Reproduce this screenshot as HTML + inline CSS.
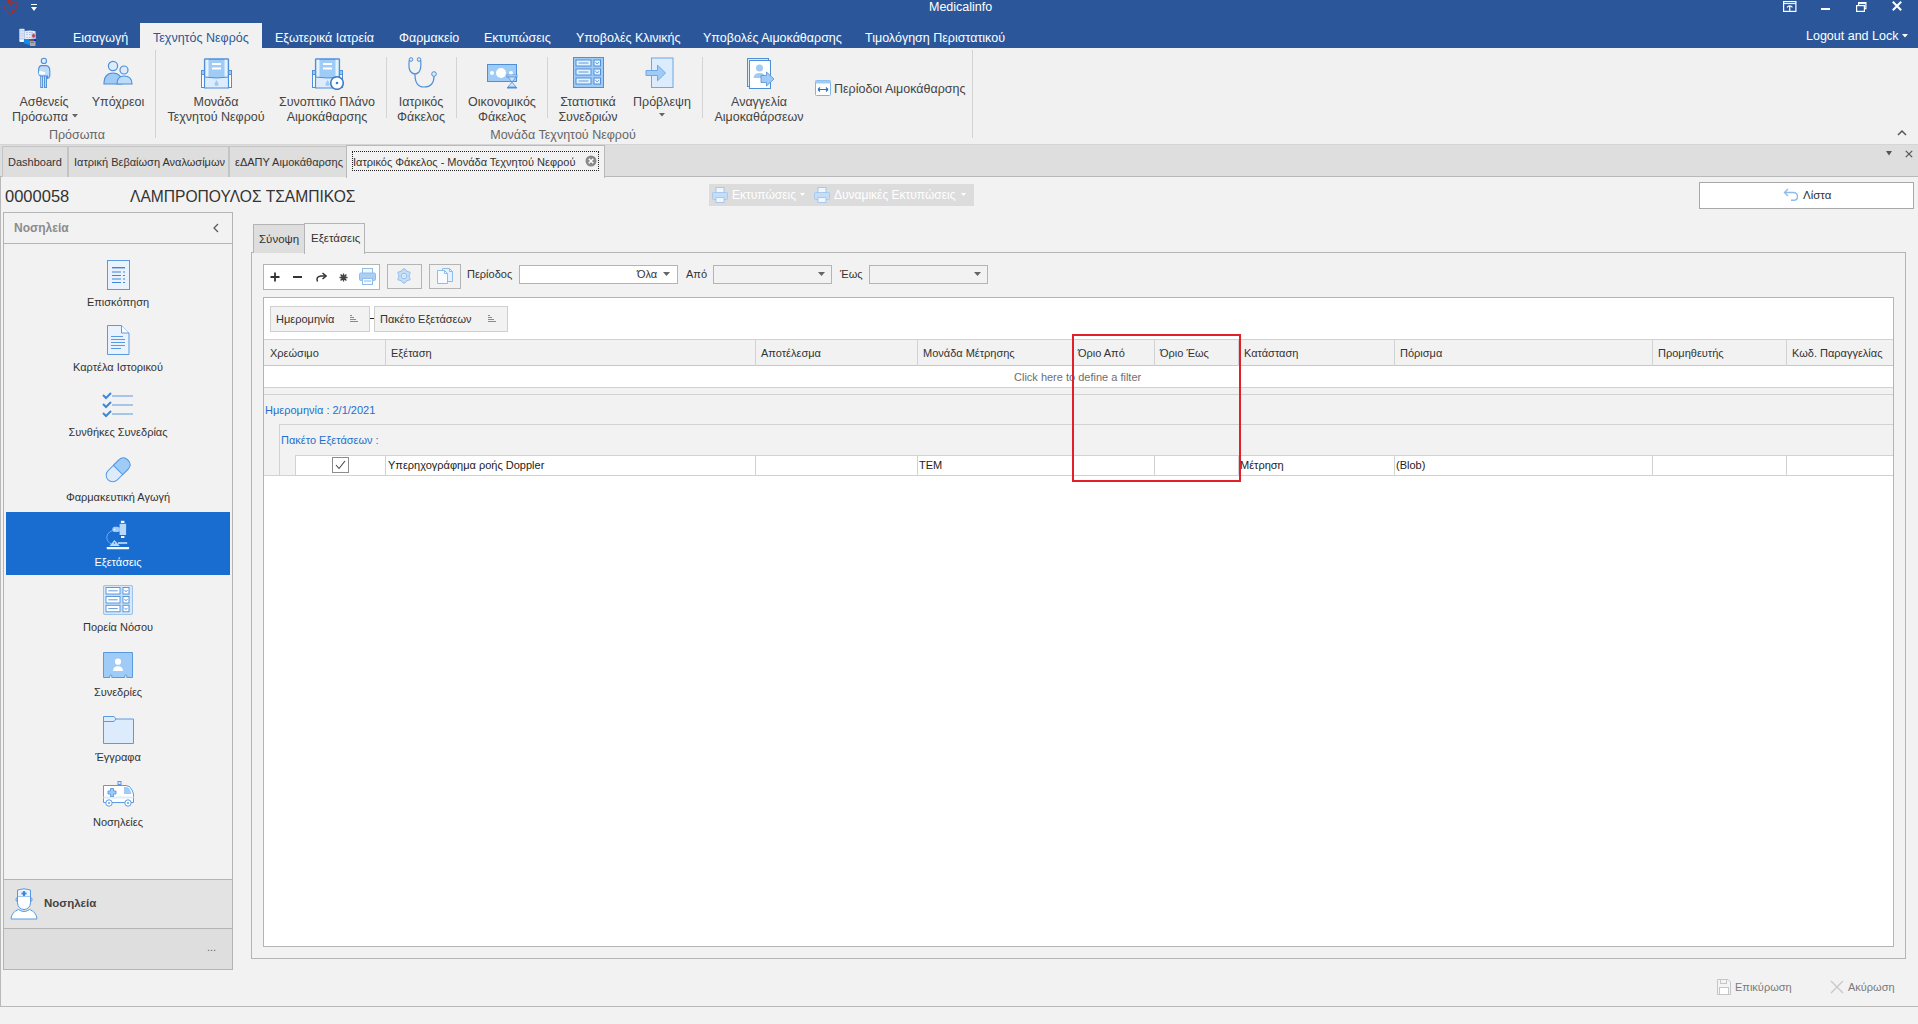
<!DOCTYPE html>
<html><head><meta charset="utf-8">
<style>
*{margin:0;padding:0;box-sizing:border-box}
html,body{width:1918px;height:1024px;overflow:hidden;background:#f2f2f2;font-family:"Liberation Sans",sans-serif;color:#333}
.a{position:absolute;white-space:nowrap}
.t{position:absolute;white-space:nowrap;line-height:1}
#title{left:0;top:0;width:1918px;height:48px;background:#2b579a}
.rt{position:absolute;top:32px;font-size:12.5px;color:#fff;line-height:1}
#ribbon{left:0;top:48px;width:1918px;height:97px;background:#f1f1f1;border-bottom:1px solid #d5d5d5}
.rl{position:absolute;font-size:12.5px;color:#444;line-height:15px;text-align:center;white-space:nowrap}
.sep{position:absolute;width:1px;background:#d4d4d4}
.doctabs{left:0;top:145px;width:1918px;height:32px;background:#dedede;border-bottom:1px solid #b9b9b9}
.dt{position:absolute;white-space:nowrap;top:146px;height:31px;background:#dedede;border:1px solid #c4c4c4;border-bottom:none;font-size:11px;color:#333;line-height:31px;padding-left:5px}
.bx{position:absolute;border:1px solid #adadad}
.nav-l{position:absolute;font-size:11px;color:#333;text-align:center;width:224px;left:6px;line-height:1}
.gh{position:absolute;top:340px;height:26px;font-size:11px;color:#333;line-height:26px}
.vs{position:absolute;width:1px;background:#d8d8d8}
.hs{position:absolute;height:1px;background:#d8d8d8}
</style></head><body>

<!-- title bar -->
<div class="a" id="title"></div>
<div class="t" style="left:929px;top:1px;font-size:12.5px;color:#fff">Medicalinfo</div>

<!-- ribbon tabs -->
<div class="a" style="left:140px;top:23px;width:122px;height:26px;background:#f1f1f1"></div>
<div class="rt" style="left:73px">Εισαγωγή</div>
<div class="rt" style="left:153px;color:#2b579a">Τεχνητός Νεφρός</div>
<div class="rt" style="left:275px">Εξωτερικά Ιατρεία</div>
<div class="rt" style="left:399px">Φαρμακείο</div>
<div class="rt" style="left:484px">Εκτυπώσεις</div>
<div class="rt" style="left:576px">Υποβολές Κλινικής</div>
<div class="rt" style="left:703px">Υποβολές Αιμοκάθαρσης</div>
<div class="rt" style="left:865px">Τιμολόγηση Περιστατικού</div>
<div class="rt" style="left:1806px;top:30px">Logout and Lock</div>

<!-- ribbon body -->
<div class="a" id="ribbon"></div>
<!-- title bar icons -->
<svg class="a" style="left:0px;top:0px" width="20" height="16" viewBox="0 0 20 16"><ellipse cx="8.9" cy="1.6" rx="1.9" ry="2.2" fill="#b8281f"/><path d="M8.4 5.6 Q5 5 4.4 6.6 Q4 9.5 6 11 L11 14.6" fill="none" stroke="#a83040" stroke-width="1" opacity="0.85"/><path d="M9.6 6 L13 2.4 Q16 0.8 17.4 2.4 Q17.8 5 16 8.5 L14 11" fill="none" stroke="#b02a26" stroke-width="1.1"/><path d="M9.5 4.5 V8" stroke="#8a3a50" stroke-width="0.8"/><circle cx="12.6" cy="11.8" r="1.4" fill="#c0241a"/></svg>
<svg class="a" style="left:31px;top:4px" width="7" height="8" viewBox="0 0 7 8"><rect x="0" y="0" width="6" height="1" fill="#fff"/><path d="M0 3 H6 L3 7 Z" fill="#fff"/></svg>
<svg class="a" style="left:1783px;top:1px" width="14" height="11" viewBox="0 0 14 11"><rect x="0.6" y="0.6" width="12.3" height="9.8" fill="none" stroke="#fff" stroke-width="1.2"/><line x1="0.6" y1="2.6" x2="12.9" y2="2.6" stroke="#fff" stroke-width="1"/><path d="M4 6.3 Q6.75 3.3 9.5 6.3 M6.75 5 V10" stroke="#fff" fill="none" stroke-width="1.2"/></svg>
<div class="a" style="left:1821px;top:7.5px;width:9px;height:2.5px;background:#fff"></div>
<svg class="a" style="left:1856px;top:1px" width="11" height="11" viewBox="0 0 11 11"><rect x="0.6" y="4.6" width="7.8" height="5.8" fill="none" stroke="#fff" stroke-width="1.2"/><path d="M2.6 4.6 V1.6 H9.9 V7.6 H8.4" fill="none" stroke="#fff" stroke-width="1.2"/><path d="M2.6 2.6 H9.9" stroke="#fff" stroke-width="1"/></svg>
<svg class="a" style="left:1892px;top:1px" width="10" height="10" viewBox="0 0 10 10"><path d="M0.8 0.8 L9.2 9.2 M9.2 0.8 L0.8 9.2" stroke="#fff" stroke-width="2"/></svg>
<svg class="a" style="left:19px;top:28px" width="18" height="18" viewBox="0 0 18 18"><rect x="0.3" y="0.8" width="5.3" height="13.2" rx="0.8" fill="#dbe4f4"/><g fill="#b9c9e6"><rect x="1" y="2.5" width="4" height="0.7"/><rect x="1" y="5" width="4" height="0.7"/><rect x="1" y="7.5" width="4" height="0.7"/><rect x="1" y="10" width="4" height="0.7"/></g><rect x="1" y="12" width="3.5" height="1.6" fill="#fff"/><path d="M5.5 3 Q11 2 16.5 3.2 V11 H5.5 Z" fill="#e6ecf8"/><g fill="#6b8cc8"><circle cx="8" cy="4.5" r="0.5"/><circle cx="8" cy="6.6" r="0.5"/><circle cx="8" cy="9.2" r="0.5"/><circle cx="13" cy="4.5" r="0.5"/><rect x="10" y="4.3" width="1.6" height="0.5"/><rect x="10" y="6.4" width="1.6" height="0.5"/><rect x="10" y="9" width="1.6" height="0.5"/></g><rect x="12.5" y="5" width="4" height="6" fill="#a9c8ee"/><path d="M14.6 5.6 L16.6 7.8 L14.6 10 L12.6 7.8 Z" fill="#e23b3b"/><path d="M5 11 H10.5 V17 L5 15.5 Z" fill="#1289ee"/><rect x="10.5" y="11.3" width="4.5" height="1.8" fill="#6b5a48"/><rect x="15" y="11.3" width="2" height="2" fill="#0a1ed8"/><path d="M10.5 13 H16.5 V18 H11 Z" fill="#a8a8b0"/><rect x="11.5" y="13.8" width="3.5" height="1.2" fill="#7b7b72"/></svg>
<svg class="a" style="left:1902px;top:34px" width="6" height="4" viewBox="0 0 6 4"><path d="M0 0 H6 L3 3.5 Z" fill="#fff"/></svg>

<!-- ribbon separators -->
<div class="sep" style="left:155px;top:50px;height:88px"></div>
<div class="sep" style="left:386px;top:57px;height:61px"></div>
<div class="sep" style="left:456px;top:57px;height:61px"></div>
<div class="sep" style="left:547px;top:57px;height:61px"></div>
<div class="sep" style="left:702px;top:57px;height:61px"></div>
<div class="sep" style="left:972px;top:50px;height:88px"></div>

<!-- ribbon icons -->
<svg class="a" style="left:34px;top:57px" width="20" height="32" viewBox="0 0 20 32"><circle cx="9.9" cy="3.9" r="2.6" fill="#dcecfc" stroke="#4f8fd8" stroke-width="1.1"/><path d="M6.8 18.5 V30.5 H8.6 V19 M10.6 19 V30.5 H12.4 V18.5" fill="#bcdcfa" stroke="#4f8fd8" stroke-width="1.1"/><rect x="7.3" y="19" width="0.8" height="11" fill="#bcdcfa"/><rect x="11.1" y="19" width="0.8" height="11" fill="#bcdcfa"/><path d="M7 8.6 H12.5 Q15.8 9.5 15.8 13.5 V19 Q15.5 21 13.5 21.5 V19 H6.5 Q4.6 18 4.6 15 V12.5 Q5 9 7 8.6 Z" fill="#bcdcfa" stroke="#4f8fd8" stroke-width="1.1"/><path d="M5 14.3 Q7 13.3 9 14.8 Q11 14.8 11.5 16 Q11 17.5 9.5 17.5 H5 Z" fill="#fff"/></svg>
<svg class="a" style="left:103px;top:60px" width="32" height="26" viewBox="0 0 32 26"><circle cx="10" cy="6" r="4.6" fill="#dcecfc" stroke="#4f8fd8" stroke-width="1.2"/><path d="M1 24 Q1 13 10 13 Q19 13 19 24 Z" fill="#9fcbf7" stroke="#4f8fd8" stroke-width="1.2"/><circle cx="21" cy="10" r="4" fill="#dcecfc" stroke="#4f8fd8" stroke-width="1.2"/><path d="M14 24 Q14 16 21 16 Q29 16 29 24 Z" fill="#bcdcfa" stroke="#4f8fd8" stroke-width="1.2"/></svg>
<svg class="a" style="left:201px;top:58px" width="31" height="31" viewBox="0 0 31 31"><rect x="3.5" y="12" width="24" height="18" fill="#dcecfc" stroke="#4f8fd8"/><rect x="0.5" y="12.5" width="3" height="17" fill="#fff" stroke="#4f8fd8"/><rect x="27.5" y="12.5" width="3" height="17" fill="#fff" stroke="#4f8fd8"/><rect x="0.5" y="12.5" width="3" height="4" fill="#9fcbf7" stroke="#4f8fd8"/><rect x="27.5" y="12.5" width="3" height="4" fill="#9fcbf7" stroke="#4f8fd8"/><path d="M3.5 1 H27.5 V19 Q15.5 21 3.5 19 Z" fill="#9fcbf7" stroke="#4f8fd8"/><rect x="4.5" y="1.5" width="3" height="17" fill="#e6f2fd"/><rect x="23.5" y="1.5" width="3" height="17" fill="#e6f2fd"/><path d="M3.5 1 V30 M27.5 1 V30 M3.5 1 H27.5" stroke="#4f8fd8" fill="none" stroke-width="1.2"/><rect x="11" y="5" width="9" height="2" fill="#fff"/><rect x="11" y="9.5" width="9" height="2" fill="#fff"/><path d="M15.5 22 Q13 25.5 13.5 27 Q15.5 29 17.5 27 Q18 25.5 15.5 22 Z" fill="#9fcbf7"/></svg>
<svg class="a" style="left:312px;top:58px" width="33" height="32" viewBox="0 0 33 32"><rect x="3.5" y="12" width="24" height="18" fill="#dcecfc" stroke="#4f8fd8"/><rect x="0.5" y="12.5" width="3" height="17" fill="#fff" stroke="#4f8fd8"/><rect x="27.5" y="12.5" width="3" height="17" fill="#fff" stroke="#4f8fd8"/><rect x="0.5" y="12.5" width="3" height="4" fill="#9fcbf7" stroke="#4f8fd8"/><rect x="27.5" y="12.5" width="3" height="4" fill="#9fcbf7" stroke="#4f8fd8"/><path d="M3.5 1 H27.5 V19 Q15.5 21 3.5 19 Z" fill="#9fcbf7" stroke="#4f8fd8"/><rect x="4.5" y="1.5" width="3" height="17" fill="#e6f2fd"/><rect x="23.5" y="1.5" width="3" height="17" fill="#e6f2fd"/><path d="M3.5 1 V30 M27.5 1 V30 M3.5 1 H27.5" stroke="#4f8fd8" fill="none" stroke-width="1.2"/><rect x="11" y="5" width="9" height="2" fill="#fff"/><rect x="11" y="9.5" width="9" height="2" fill="#fff"/><path d="M15.5 22 Q13 25.5 13.5 27 Q15.5 29 17.5 27 Q18 25.5 15.5 22 Z" fill="#9fcbf7"/><circle cx="25" cy="25" r="6.3" fill="#fff" stroke="#3a7cc8" stroke-width="1.6"/><circle cx="25" cy="25" r="1.3" fill="#3a7cc8"/></svg>
<svg class="a" style="left:406px;top:57px" width="32" height="32" viewBox="0 0 32 32"><circle cx="5" cy="2.5" r="1.8" fill="#dcecfc" stroke="#4f8fd8"/><circle cx="13" cy="2.5" r="1.8" fill="#dcecfc" stroke="#4f8fd8"/><circle cx="28" cy="17" r="2.3" fill="#dcecfc" stroke="#4f8fd8"/><path d="M3.3 3 Q2 12 5 15 Q9 19 13 15 Q15.5 12 14.7 3" fill="none" stroke="#4f8fd8" stroke-width="1.2"/><path d="M9 17.5 Q9 30 18 30 Q28 30 28 19.3" fill="none" stroke="#4f8fd8" stroke-width="1.2"/></svg>
<svg class="a" style="left:487px;top:64px" width="31" height="25" viewBox="0 0 31 25"><rect x="0.5" y="0.5" width="29" height="17" fill="#9fcbf7" stroke="#4f8fd8"/><circle cx="14" cy="9" r="5" fill="#fff"/><circle cx="5" cy="9" r="2" fill="#fff"/><circle cx="24" cy="9" r="2" fill="#fff"/><rect x="20" y="11" width="10" height="2" fill="#dcecfc" stroke="#4f8fd8" stroke-width="0.8"/><path d="M21 13 L29 13 L25 18 Z M21 23 L29 23 L25 18 Z" fill="#cfe4fb" stroke="#4f8fd8" stroke-width="0.8"/><rect x="20" y="23" width="10" height="1.5" fill="#4f8fd8"/></svg>
<svg class="a" style="left:573px;top:57px" width="31" height="31" viewBox="0 0 31 31"><rect x="0.5" y="0.5" width="30" height="30" fill="#9fcbf7" stroke="#4f8fd8"/><g fill="#e6f2fd" stroke="#4f8fd8"><rect x="3" y="3" width="15" height="6"/><rect x="3" y="12" width="15" height="6"/><rect x="3" y="21" width="15" height="6"/><rect x="21" y="3" width="6.5" height="6"/><rect x="21" y="12" width="6.5" height="6"/><rect x="21" y="21" width="6.5" height="6"/></g><g stroke="#4f8fd8" fill="none" stroke-width="0.9"><line x1="5.5" y1="6" x2="15.5" y2="6"/><line x1="5.5" y1="15" x2="15.5" y2="15"/><line x1="5.5" y1="24" x2="15.5" y2="24"/><path d="M22.5 5.2 L24.2 7 L26 5.2 M22.5 14.2 L24.2 16 L26 14.2 M22.5 23.2 L24.2 25 L26 23.2"/></g></svg>
<svg class="a" style="left:645px;top:57px" width="30" height="32" viewBox="0 0 30 32"><rect x="6.5" y="1" width="21.5" height="29.5" fill="#dcecfc" stroke="#6fa6e4"/><path d="M1 13.5 H12.5 V8.2 L20.5 16 L12.5 23.8 V18.5 H1 Z" fill="#9fcbf7" stroke="#6fa6e4" stroke-linejoin="round"/></svg>
<svg class="a" style="left:747px;top:57px" width="29" height="32" viewBox="0 0 29 32"><rect x="0.5" y="1.5" width="21" height="28" fill="#dcecfc" stroke="#4f8fd8"/><rect x="2.5" y="3.5" width="21" height="28" fill="#fff" stroke="#4f8fd8"/><circle cx="12.5" cy="11" r="3.5" fill="#9fcbf7"/><path d="M6.5 21 Q7 16 12.5 16 Q17 16 18 19 V21 Z" fill="#9fcbf7"/><path d="M14 18.5 H19.5 V15 L27 22 L19.5 29 V25.5 H14 Z" fill="#9fcbf7" stroke="#4f8fd8" stroke-width="0.8"/></svg>
<svg class="a" style="left:815px;top:80px" width="16" height="16" viewBox="0 0 16 16"><rect x="0.5" y="0.5" width="15" height="15" rx="1" fill="#fff" stroke="#7fb2e8"/><rect x="0.5" y="0.5" width="15" height="3" fill="#9fcbf7"/><path d="M3 9.5 H13 M3 9.5 L5 7.5 M3 9.5 L5 11.5 M13 9.5 L11 7.5 M13 9.5 L11 11.5" stroke="#2f6db5" stroke-width="1.1" fill="none"/></svg>

<!-- ribbon labels -->
<div class="rl" style="left:14px;top:95px;width:60px">Ασθενείς</div>
<div class="rl" style="left:12px;top:110px;text-align:left">Πρόσωπα</div>
<svg class="a" style="left:72px;top:114px" width="6" height="4" viewBox="0 0 6 4"><path d="M0 0 H6 L3 3.5 Z" fill="#666"/></svg>
<div class="rl" style="left:88px;top:95px;width:60px">Υπόχρεοι</div>
<div class="rl" style="left:156px;top:95px;width:120px">Μονάδα<br>Τεχνητού Νεφρού</div>
<div class="rl" style="left:267px;top:95px;width:120px">Συνοπτικό Πλάνο<br>Αιμοκάθαρσης</div>
<div class="rl" style="left:381px;top:95px;width:80px">Ιατρικός<br>Φάκελος</div>
<div class="rl" style="left:462px;top:95px;width:80px">Οικονομικός<br>Φάκελος</div>
<div class="rl" style="left:548px;top:95px;width:80px">Στατιστικά<br>Συνεδριών</div>
<div class="rl" style="left:622px;top:95px;width:80px">Πρόβλεψη</div>
<svg class="a" style="left:659px;top:113px" width="6" height="4" viewBox="0 0 6 4"><path d="M0 0 H6 L3 3.5 Z" fill="#666"/></svg>
<div class="rl" style="left:699px;top:95px;width:120px">Αναγγελία<br>Αιμοκαθάρσεων</div>
<div class="rl" style="left:834px;top:82px;text-align:left">Περίοδοι Αιμοκάθαρσης</div>
<div class="rl" style="left:17px;top:128px;width:120px;color:#666">Πρόσωπα</div>
<div class="rl" style="left:443px;top:128px;width:240px;color:#666">Μονάδα Τεχνητού Νεφρού</div>
<svg class="a" style="left:1897px;top:129px" width="10" height="7" viewBox="0 0 10 7"><path d="M1 6 L5 2 L9 6" stroke="#555" stroke-width="1.5" fill="none"/></svg>

<!-- doc tabs -->
<div class="a doctabs"></div>
<div class="dt" style="left:2px;width:66px">Dashboard</div>
<div class="dt" style="left:68px;width:161px">Ιατρική Βεβαίωση Αναλωσίμων</div>
<div class="dt" style="left:229px;width:118px">εΔΑΠΥ Αιμοκάθαρσης</div>
<div class="a" style="left:346px;top:145px;width:259px;height:33px;background:#f2f2f2;border:1px solid #b9b9b9;border-bottom:none"></div>
<div class="a" style="left:352px;top:151px;width:247px;height:20px;border:1px dotted #222"></div>
<div class="t" style="left:353px;top:157px;font-size:11px;color:#333">Ιατρικός Φάκελος - Μονάδα Τεχνητού Νεφρού</div>
<svg class="a" style="left:585px;top:155px" width="12" height="12" viewBox="0 0 12 12"><circle cx="6" cy="6" r="5.5" fill="#8a8a8a"/><path d="M3.8 3.8 L8.2 8.2 M8.2 3.8 L3.8 8.2" stroke="#fff" stroke-width="1.5"/></svg>
<svg class="a" style="left:1886px;top:151px" width="6" height="5" viewBox="0 0 6 5"><path d="M0 0 H6 L3 4.5 Z" fill="#555"/></svg>
<svg class="a" style="left:1905px;top:150px" width="8" height="8" viewBox="0 0 8 8"><path d="M0.8 0.8 L7.2 7.2 M7.2 0.8 L0.8 7.2" stroke="#555" stroke-width="1.2"/></svg>

<!-- content frame -->
<div class="a" style="left:0;top:177px;width:1918px;height:830px;border-left:1px solid #b9b9b9;border-bottom:1px solid #b9b9b9"></div>
<div class="t" style="left:5px;top:188px;font-size:16.5px;color:#333">0000058</div>
<div class="t" style="left:130px;top:188px;font-size:16.5px;transform:scaleX(0.945);transform-origin:0 0;color:#333">ΛΑΜΠΡΟΠΟΥΛΟΣ ΤΣΑΜΠΙΚΟΣ</div>
<div class="a" style="left:709px;top:184px;width:265px;height:22px;background:#dcdcdc"></div>
<svg class="a" style="left:712px;top:187px" width="16" height="16" viewBox="0 0 16 16"><rect x="4" y="0.5" width="8" height="5" fill="#f0f6fd" stroke="#a8c8ec"/><rect x="0.5" y="5.5" width="15" height="7" rx="1" fill="#c5ddf6" stroke="#a8c8ec"/><rect x="4" y="10.5" width="8" height="5" fill="#f0f6fd" stroke="#a8c8ec"/></svg>
<div class="t" style="left:732px;top:189px;font-size:12px;color:#fff">Εκτυπώσεις</div>
<svg class="a" style="left:800px;top:193px" width="5" height="3" viewBox="0 0 5 3"><path d="M0 0 H5 L2.5 3 Z" fill="#fff"/></svg>
<svg class="a" style="left:814px;top:187px" width="16" height="16" viewBox="0 0 16 16"><rect x="4" y="0.5" width="8" height="5" fill="#f0f6fd" stroke="#a8c8ec"/><rect x="0.5" y="5.5" width="15" height="7" rx="1" fill="#c5ddf6" stroke="#a8c8ec"/><rect x="4" y="10.5" width="8" height="5" fill="#f0f6fd" stroke="#a8c8ec"/></svg>
<div class="t" style="left:834px;top:189px;font-size:12px;color:#fff">Δυναμικές Εκτυπώσεις</div>
<svg class="a" style="left:961px;top:193px" width="5" height="3" viewBox="0 0 5 3"><path d="M0 0 H5 L2.5 3 Z" fill="#fff"/></svg>
<div class="a" style="left:1699px;top:182px;width:215px;height:27px;background:#fff;border:1px solid #a8a8a8"></div>
<svg class="a" style="left:1783px;top:188px" width="16" height="13" viewBox="0 0 16 13"><path d="M2 4.5 H10 Q14.5 4.5 14.5 8.5 Q14.5 12.3 10.5 12.3 H8" fill="none" stroke="#8dbbea" stroke-width="1.4"/><path d="M5 1 L1.5 4.5 L5 8" fill="none" stroke="#8dbbea" stroke-width="1.4"/></svg>
<div class="t" style="left:1803px;top:190px;font-size:11.5px;color:#333">Λίστα</div>

<!-- nav panel -->
<div class="a" style="left:3px;top:212px;width:230px;height:758px;border:1px solid #b4b4b4;background:#f2f2f2"></div>
<div class="a" style="left:4px;top:243px;width:228px;height:1px;background:#b4b4b4"></div>
<div class="t" style="left:14px;top:222px;font-size:12px;font-weight:bold;color:#8c8c8c">Νοσηλεία</div>
<svg class="a" style="left:213px;top:223px" width="6" height="10" viewBox="0 0 6 10"><path d="M5 1 L1 5 L5 9" stroke="#555" stroke-width="1.2" fill="none"/></svg>
<div class="a" style="left:6px;top:512px;width:224px;height:63px;background:#1a6dd0"></div>
<div class="nav-l" style="top:297px">Επισκόπηση</div>
<div class="nav-l" style="top:362px">Καρτέλα Ιστορικού</div>
<div class="nav-l" style="top:427px">Συνθήκες Συνεδρίας</div>
<div class="nav-l" style="top:492px">Φαρμακευτική Αγωγή</div>
<div class="nav-l" style="top:557px;color:#fff">Εξετάσεις</div>
<div class="nav-l" style="top:622px">Πορεία Νόσου</div>
<div class="nav-l" style="top:687px">Συνεδρίες</div>
<div class="nav-l" style="top:752px">Έγγραφα</div>
<div class="nav-l" style="top:817px">Νοσηλείες</div>
<div class="a" style="left:4px;top:879px;width:228px;height:50px;background:#e3e3e3;border-top:1px solid #b4b4b4;border-bottom:1px solid #b4b4b4"></div>
<div class="a" style="left:4px;top:929px;width:228px;height:40px;background:#dedede"></div>
<div class="t" style="left:44px;top:898px;font-size:11.5px;font-weight:bold;color:#444">Νοσηλεία</div>
<div class="t" style="left:207px;top:942px;font-size:11px;color:#666">...</div>

<!-- main tab control -->
<div class="a" style="left:251px;top:252px;width:1655px;height:707px;border:1px solid #b4b4b4"></div>
<div class="a" style="left:253px;top:224px;width:52px;height:29px;background:#dedede;border:1px solid #b4b4b4;border-bottom:none"></div>
<div class="a" style="left:304px;top:223px;width:61px;height:31px;background:#f2f2f2;border:1px solid #b4b4b4;border-bottom:none"></div>
<div class="t" style="left:259px;top:234px;font-size:11.5px;color:#333">Σύνοψη</div>
<div class="t" style="left:311px;top:233px;font-size:11.5px;color:#333">Εξετάσεις</div>

<!-- toolbar -->
<div class="a" style="left:263px;top:264px;width:117px;height:26px;background:#fff;border:1px solid #b4b4b4"></div>
<div class="a" style="left:387px;top:264px;width:35px;height:25px;background:#f2f2f2;border:1px solid #b4b4b4"></div>
<div class="a" style="left:429px;top:264px;width:32px;height:25px;background:#f2f2f2;border:1px solid #b4b4b4"></div>
<div class="t" style="left:467px;top:269px;font-size:11px;color:#333">Περίοδος</div>
<div class="a" style="left:519px;top:265px;width:159px;height:19px;background:#fff;border:1px solid #b4b4b4"></div>
<div class="t" style="left:637px;top:269px;font-size:11px;color:#333">Όλα</div>
<div class="t" style="left:686px;top:269px;font-size:11px;color:#333">Από</div>
<div class="a" style="left:713px;top:265px;width:119px;height:19px;background:#f2f2f2;border:1px solid #b4b4b4"></div>
<div class="t" style="left:840px;top:269px;font-size:11px;color:#333">Έως</div>
<div class="a" style="left:869px;top:265px;width:119px;height:19px;background:#f2f2f2;border:1px solid #b4b4b4"></div>

<!-- grid -->
<div class="a" style="left:263px;top:297px;width:1631px;height:650px;background:#fff;border:1px solid #b4b4b4"></div>
<div class="a" style="left:270px;top:306px;width:100px;height:26px;background:#f2f2f2;border:1px solid #cfcfcf"></div>
<div class="t" style="left:276px;top:314px;font-size:11px;color:#333">Ημερομηνία</div>
<div class="a" style="left:370px;top:318px;width:4px;height:1px;background:#222"></div>
<div class="a" style="left:374px;top:306px;width:134px;height:26px;background:#f2f2f2;border:1px solid #cfcfcf"></div>
<div class="t" style="left:380px;top:314px;font-size:11px;color:#333">Πακέτο Εξετάσεων</div>
<div class="a" style="left:264px;top:339px;width:1629px;height:27px;background:#f2f2f2;border-top:1px solid #d2d2d2;border-bottom:1px solid #c8c8c8"></div>
<div class="a" style="left:264px;top:387px;width:1629px;height:8px;background:#f2f2f2;border-top:1px solid #d2d2d2;border-bottom:1px solid #d2d2d2"></div>
<div class="a" style="left:264px;top:395px;width:1629px;height:81px;background:#f2f2f2;border-bottom:1px solid #d2d2d2"></div>
<div class="a" style="left:279px;top:424px;width:1614px;height:1px;background:#d2d2d2"></div>
<div class="a" style="left:279px;top:424px;width:1px;height:52px;background:#d2d2d2"></div>
<div class="a" style="left:295px;top:455px;width:1598px;height:20px;background:#fff;border-top:1px solid #d2d2d2;border-left:1px solid #d2d2d2"></div>
<div class="t" style="left:265px;top:405px;font-size:11px;color:#1e6fd0">Ημερομηνία : 2/1/2021</div>
<div class="t" style="left:281px;top:435px;font-size:11px;color:#1e6fd0">Πακέτο Εξετάσεων :</div>
<div class="a" style="left:332px;top:457px;width:17px;height:16px;border:1px solid #8c8c8c;background:#fff"></div>
<svg class="a" style="left:335px;top:460px" width="11" height="10" viewBox="0 0 11 10"><path d="M1 5 L4 8.5 L10 1" stroke="#444" stroke-width="1.1" fill="none"/></svg>
<div class="t" style="left:1014px;top:372px;font-size:11px;color:#6e6e6e">Click here to define a filter</div>


<!-- nav icons -->
<svg class="a" style="left:107px;top:260px" width="24" height="31" viewBox="0 0 24 31"><rect x="0.5" y="0.5" width="22" height="29" fill="#eaf3fd" stroke="#5a9ae0"/><g fill="#3f86d6"><rect x="5" y="7" width="13" height="1.4"/><rect x="5" y="11.5" width="9" height="1"/><rect x="16" y="11.5" width="2" height="1"/><rect x="5" y="15" width="9" height="1"/><rect x="16" y="15" width="2" height="1"/><rect x="5" y="18.5" width="9" height="1"/><rect x="16" y="18.5" width="2" height="1"/><rect x="5" y="22" width="9" height="1"/><rect x="16" y="22" width="2" height="1"/></g></svg>
<svg class="a" style="left:107px;top:325px" width="23" height="30" viewBox="0 0 23 30"><path d="M0.5 0.5 H14.5 L22 8 V29.5 H0.5 Z" fill="#eaf3fd" stroke="#5a9ae0"/><path d="M14.5 0.5 V8 H22" fill="#fff" stroke="#5a9ae0"/><g fill="#5a9ae0"><rect x="4" y="11" width="12" height="1"/><rect x="4" y="14" width="14" height="1"/><rect x="4" y="17" width="14" height="1"/><rect x="4" y="20" width="14" height="1"/><rect x="4" y="23" width="10" height="1"/></g></svg>
<svg class="a" style="left:102px;top:392px" width="32" height="26" viewBox="0 0 32 26"><g stroke="#3f86d6" stroke-width="2" fill="none"><path d="M1 3 L4 6 L9 1"/><path d="M1 12 L4 15 L9 10"/><path d="M1 21 L4 24 L9 19"/></g><g fill="#5a9ae0"><rect x="10" y="3.5" width="21" height="1"/><rect x="10" y="12.5" width="21" height="1"/><rect x="10" y="21.5" width="21" height="1"/></g></svg>
<svg class="a" style="left:103px;top:455px" width="30" height="30" viewBox="0 0 30 30"><g transform="rotate(45 15 15)"><rect x="8.5" y="1" width="13" height="28" rx="6.5" fill="#dcecfc" stroke="#5a9ae0"/><path d="M8.5 15 V7.5 Q8.5 1 15 1 Q21.5 1 21.5 7.5 V15 Z" fill="#9fcbf7" stroke="#5a9ae0"/></g></svg>
<svg class="a" style="left:106px;top:520px" width="24" height="30" viewBox="0 0 24 30"><path d="M6.5 10.5 Q1 12.5 0.8 17.5 Q1 22 5.5 24" fill="none" stroke="#7fb0e6" stroke-width="0.9"/><rect x="14.9" y="0.8" width="3.5" height="2.2" fill="#fff"/><rect x="13.6" y="3.8" width="6.5" height="11.2" fill="#b8dafa"/><rect x="15" y="16" width="3.4" height="2" fill="#fff"/><rect x="6.3" y="6.8" width="7.3" height="5.2" rx="2.6" fill="#9fcbf7"/><rect x="13" y="7.5" width="0.8" height="4" fill="#9fcbf7"/><circle cx="8.6" cy="9.5" r="0.8" fill="#fff"/><path d="M8.5 20 L13.8 26 H3.4 Z" fill="#b8dafa"/><circle cx="8.5" cy="23" r="0.8" fill="#2a72cc"/><rect x="11.9" y="22" width="9.3" height="2" fill="#9fcbf7"/><rect x="0.7" y="27" width="22.4" height="2.2" rx="0.6" fill="#f4f9fe"/></svg>
<svg class="a" style="left:103px;top:585px" width="30" height="30" viewBox="0 0 30 30"><rect x="0.7" y="0.7" width="28.6" height="28.6" rx="1" fill="#c5dff7" stroke="#9cc3ea" stroke-width="1.4"/><rect x="1.9" y="1.9" width="26.2" height="26.2" fill="none" stroke="#eef6fe" stroke-width="1"/><g fill="#fff" stroke="#4f8fd8" stroke-width="0.9"><rect x="3" y="2.5" width="14" height="6.5"/><rect x="3" y="11.5" width="14" height="6.5"/><rect x="3" y="20.3" width="14" height="6.5"/><rect x="20" y="2.5" width="6" height="6.5"/><rect x="20" y="11.5" width="6" height="6.5"/><rect x="20" y="20.3" width="6" height="6.5"/></g><g stroke="#4f8fd8" fill="none" stroke-width="0.9"><line x1="5.3" y1="5.8" x2="14.7" y2="5.8"/><line x1="5.3" y1="14.8" x2="14.7" y2="14.8"/><line x1="5.3" y1="23.6" x2="14.7" y2="23.6"/><path d="M21.4 5 L23 6.8 L24.6 5 M21.4 14 L23 15.8 L24.6 14 M21.4 22.8 L23 24.6 L24.6 22.8"/></g></svg>
<svg class="a" style="left:103px;top:652px" width="30" height="27" viewBox="0 0 30 27"><path d="M0.5 0.5 H29.5 V25.5 H23.8 V23.5 Q22.8 22.3 21.8 23.5 V25.5 H8.8 V23.5 Q7.8 22.3 6.8 23.5 V25.5 H0.5 Z" fill="#9fcbf7" stroke="#5a9ae0"/><circle cx="15" cy="9.7" r="3.1" fill="#fff"/><path d="M10 19 Q10 14.2 15 14.2 Q20 14.2 20 19 Z" fill="#fff"/></svg>
<svg class="a" style="left:103px;top:716px" width="31" height="28" viewBox="0 0 31 28"><path d="M0.5 0.5 H11 L13 3 H30.5 V27.5 H0.5 Z" fill="#dcecfc" stroke="#5a9ae0"/><path d="M0.5 5.5 H11 L13 3" fill="none" stroke="#5a9ae0"/></svg>
<svg class="a" style="left:102px;top:781px" width="33" height="27" viewBox="0 0 33 27"><rect x="16" y="0.5" width="3" height="3" fill="#dcecfc" stroke="#5a9ae0"/><path d="M1.5 4.5 H24 Q28 4.5 30 9 L31.5 13 V21.5 H1.5 Z" fill="#fff" stroke="#5a9ae0"/><path d="M22 6 H24 Q27 6 28.5 10 L29.5 13 H22 Z" fill="#9fcbf7"/><rect x="1.5" y="15.5" width="30" height="2" fill="#dcecfc"/><path d="M8.5 7.5 H11.5 V10 H14 V13 H11.5 V15.5 H8.5 V13 H6 V10 H8.5 Z" fill="#9fcbf7" stroke="#5a9ae0" stroke-width="0.9"/><circle cx="7" cy="22" r="3.2" fill="#fff" stroke="#5a9ae0"/><circle cx="7" cy="22" r="1" fill="#5a9ae0"/><circle cx="26" cy="22" r="3.2" fill="#fff" stroke="#5a9ae0"/><circle cx="26" cy="22" r="1" fill="#5a9ae0"/></svg>
<svg class="a" style="left:10px;top:888px" width="28" height="32" viewBox="0 0 28 32"><path d="M7.5 2 Q14 -0.5 20.5 2 V9 H7.5 Z" fill="#eaf3fd" stroke="#5a9ae0"/><path d="M13 3 H15 V4.5 H16.5 V6.5 H15 V8 H13 V6.5 H11.5 V4.5 H13 Z" fill="#3f86d6"/><path d="M7.5 9 V15 Q8 21 14 21.5 Q20 21 20.5 15 V9" fill="#fff" stroke="#5a9ae0"/><path d="M1 31 Q1.5 24 8.5 21.5 Q14 25.5 19.5 21.5 Q26.5 24 27 31 Z" fill="#fff" stroke="#5a9ae0"/><path d="M7.5 9.5 Q6 9.5 6 11.5 Q6 13.5 7.5 13.5 M20.5 9.5 Q22 9.5 22 11.5 Q22 13.5 20.5 13.5" fill="none" stroke="#5a9ae0"/></svg>

<!-- toolbar icons -->
<svg class="a" style="left:270px;top:272px" width="10" height="10" viewBox="0 0 10 10"><path d="M5 0.5 V9.5 M0.5 5 H9.5" stroke="#333" stroke-width="1.8"/></svg>
<div class="a" style="left:293px;top:276px;width:9px;height:2px;background:#333"></div>
<svg class="a" style="left:315px;top:272px" width="12" height="10" viewBox="0 0 12 10"><path d="M2.5 9.5 Q0.5 4.5 6 4 H10" fill="none" stroke="#333" stroke-width="1.5"/><path d="M7.5 1 L11 4 L7.5 7" fill="none" stroke="#333" stroke-width="1.5"/></svg>
<svg class="a" style="left:339px;top:273px" width="9" height="9" viewBox="0 0 9 9"><g stroke="#444" stroke-width="1.4"><path d="M4.5 0.5 V8.5 M0.5 4.5 H8.5 M1.6 1.6 L7.4 7.4 M7.4 1.6 L1.6 7.4"/></g><circle cx="4.5" cy="4.5" r="2.3" fill="#444"/></svg>
<svg class="a" style="left:359px;top:268px" width="17" height="17" viewBox="0 0 17 17"><rect x="3.5" y="0.5" width="10" height="5" fill="#f4f9fe" stroke="#8fbcea"/><rect x="0.5" y="5" width="16" height="7.5" rx="1.2" fill="#a9cff5" stroke="#8fbcea"/><rect x="3.5" y="10.5" width="10" height="6" fill="#f4f9fe" stroke="#8fbcea"/><line x1="5" y1="13" x2="12" y2="13" stroke="#8fbcea"/></svg>
<svg class="a" style="left:397px;top:268px" width="14" height="16" viewBox="0 0 14 16"><path d="M7 0.8 Q8.6 0.8 8.8 2.5 L11.3 3.9 Q12.9 3.2 13.2 4.8 Q13.3 6 12.2 6.6 V9.4 Q13.3 10 13.2 11.2 Q12.9 12.8 11.3 12.1 L8.8 13.5 Q8.6 15.2 7 15.2 Q5.4 15.2 5.2 13.5 L2.7 12.1 Q1.1 12.8 0.8 11.2 Q0.7 10 1.8 9.4 V6.6 Q0.7 6 0.8 4.8 Q1.1 3.2 2.7 3.9 L5.2 2.5 Q5.4 0.8 7 0.8 Z" fill="#c5dff7" stroke="#8fbcea" stroke-width="1"/><circle cx="7" cy="8" r="2.8" fill="#e8f3fd" stroke="#8fbcea" stroke-width="1"/><circle cx="7" cy="8" r="1.3" fill="#c5dff7"/></svg>
<svg class="a" style="left:437px;top:268px" width="17" height="17" viewBox="0 0 17 17"><path d="M5.5 0.5 H12.5 L15.5 3.5 V13.5 H5.5 Z" fill="#e6f2fd" stroke="#8fbcea"/><path d="M12.5 0.5 V3.5 H15.5" fill="none" stroke="#8fbcea"/><path d="M0.5 2.5 H7.5 L10.5 5.5 V15.5 H0.5 Z" fill="#f7fbff" stroke="#8fbcea"/><path d="M7.5 2.5 V5.5 H10.5" fill="none" stroke="#8fbcea"/></svg>
<svg class="a" style="left:663px;top:272px" width="7" height="4" viewBox="0 0 7 4"><path d="M0 0 H7 L3.5 4 Z" fill="#666"/></svg>
<svg class="a" style="left:818px;top:272px" width="7" height="4" viewBox="0 0 7 4"><path d="M0 0 H7 L3.5 4 Z" fill="#666"/></svg>
<svg class="a" style="left:974px;top:272px" width="7" height="4" viewBox="0 0 7 4"><path d="M0 0 H7 L3.5 4 Z" fill="#666"/></svg>
<svg class="a" style="left:350px;top:315px" width="8" height="7" viewBox="0 0 8 7"><g fill="#8a8a8a"><rect x="0" y="0" width="2" height="1"/><rect x="0" y="2" width="4" height="1"/><rect x="0" y="4" width="6" height="1"/><rect x="0" y="6" width="8" height="1"/></g></svg>
<svg class="a" style="left:488px;top:315px" width="8" height="7" viewBox="0 0 8 7"><g fill="#8a8a8a"><rect x="0" y="0" width="2" height="1"/><rect x="0" y="2" width="4" height="1"/><rect x="0" y="4" width="6" height="1"/><rect x="0" y="6" width="8" height="1"/></g></svg>

<!-- grid header -->
<div class="t" style="left:270px;top:348px;font-size:11px;color:#333">Χρεώσιμο</div>
<div class="vs" style="left:385px;top:340px;height:26px;background:#d2d2d2"></div>
<div class="t" style="left:391px;top:348px;font-size:11px;color:#333">Εξέταση</div>
<div class="vs" style="left:755px;top:340px;height:26px;background:#d2d2d2"></div>
<div class="t" style="left:761px;top:348px;font-size:11px;color:#333">Αποτέλεσμα</div>
<div class="vs" style="left:917px;top:340px;height:26px;background:#d2d2d2"></div>
<div class="t" style="left:923px;top:348px;font-size:11px;color:#333">Μονάδα Μέτρησης</div>
<div class="vs" style="left:1072px;top:340px;height:26px;background:#d2d2d2"></div>
<div class="t" style="left:1078px;top:348px;font-size:11px;color:#333">Όριο Από</div>
<div class="vs" style="left:1154px;top:340px;height:26px;background:#d2d2d2"></div>
<div class="t" style="left:1160px;top:348px;font-size:11px;color:#333">Όριο Έως</div>
<div class="vs" style="left:1238px;top:340px;height:26px;background:#d2d2d2"></div>
<div class="t" style="left:1244px;top:348px;font-size:11px;color:#333">Κατάσταση</div>
<div class="vs" style="left:1394px;top:340px;height:26px;background:#d2d2d2"></div>
<div class="t" style="left:1400px;top:348px;font-size:11px;color:#333">Πόρισμα</div>
<div class="vs" style="left:1652px;top:340px;height:26px;background:#d2d2d2"></div>
<div class="t" style="left:1658px;top:348px;font-size:11px;color:#333">Προμηθευτής</div>
<div class="vs" style="left:1786px;top:340px;height:26px;background:#d2d2d2"></div>
<div class="t" style="left:1792px;top:348px;font-size:11px;color:#333">Κωδ. Παραγγελίας</div>
<div class="vs" style="left:385px;top:456px;height:20px;background:#d2d2d2"></div>
<div class="vs" style="left:755px;top:456px;height:20px;background:#d2d2d2"></div>
<div class="vs" style="left:917px;top:456px;height:20px;background:#d2d2d2"></div>
<div class="vs" style="left:1154px;top:456px;height:20px;background:#d2d2d2"></div>
<div class="vs" style="left:1238px;top:456px;height:20px;background:#d2d2d2"></div>
<div class="vs" style="left:1394px;top:456px;height:20px;background:#d2d2d2"></div>
<div class="vs" style="left:1652px;top:456px;height:20px;background:#d2d2d2"></div>
<div class="vs" style="left:1786px;top:456px;height:20px;background:#d2d2d2"></div>
<div class="t" style="left:388px;top:460px;font-size:11px;color:#222">Υπερηχογράφημα ροής Doppler</div>
<div class="t" style="left:919px;top:460px;font-size:11px;color:#222">TEM</div>
<div class="t" style="left:1240px;top:460px;font-size:11px;color:#222">Μέτρηση</div>
<div class="t" style="left:1396px;top:460px;font-size:11px;color:#222">(Blob)</div>
<div class="a" style="left:1072px;top:334px;width:169px;height:148px;border:2px solid #e2202a"></div>
<svg class="a" style="left:1717px;top:979px" width="14" height="16" viewBox="0 0 14 16"><path d="M0.5 0.5 H11 L13.5 3 V15.5 H0.5 Z" fill="#f4f4f4" stroke="#c6c6c6"/><rect x="3.5" y="0.5" width="6" height="4" fill="none" stroke="#c6c6c6"/><rect x="2.5" y="8.5" width="9" height="7" fill="#fff" stroke="#c6c6c6"/></svg>
<div class="t" style="left:1735px;top:982px;font-size:11px;color:#7a7a7a">Επικύρωση</div>
<svg class="a" style="left:1830px;top:980px" width="14" height="14" viewBox="0 0 14 14"><path d="M1 1 L13 13 M13 1 L1 13" stroke="#c8c8c8" stroke-width="1.4"/></svg>
<div class="t" style="left:1848px;top:982px;font-size:11px;color:#7a7a7a">Ακύρωση</div>
</body></html>
